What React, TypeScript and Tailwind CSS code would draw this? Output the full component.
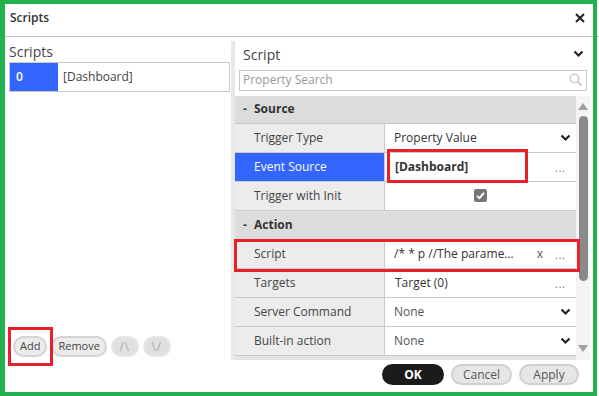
import React from "react";

const Chevron = () => (
  <svg width="11" height="8" viewBox="0 0 11 8" className="shrink-0">
    <path d="M1.5 1.5 L5.5 5.5 L9.5 1.5" fill="none" stroke="#222" strokeWidth="2.2" />
  </svg>
);

const Label = ({ children, active }: { children: React.ReactNode; active?: boolean }) => (
  <div
    className={
      "w-[150px] shrink-0 flex items-center pl-[19px] border-r border-[#c9c9c9] " +
      (active ? "bg-[#3366ff] text-white" : "bg-[#ececec] text-[#444]")
    }
  >
    {children}
  </div>
);

const Row = ({ children }: { children: React.ReactNode }) => (
  <div className="flex h-[29px] border-b border-[#c9c9c9]">{children}</div>
);

const Section = ({ title }: { title: string }) => (
  <div className="h-[28px] flex items-center bg-[#dcdcdc] border-b border-[#c9c9c9] text-[#333] font-bold">
    <span className="ml-[8px] w-[11px]">-</span>
    <span>{title}</span>
  </div>
);

const Dots = () => <span className="text-[#666] text-[10px] leading-none tracking-[1px] pt-[3px] mr-[3px]">...</span>;

export default function App() {
  return (
    <div
      className="relative w-[599px] h-[396px] bg-white overflow-hidden text-[12px] text-[#333]"
      style={{ fontFamily: '"Open Sans", "DejaVu Sans", sans-serif' }}
    >
      {/* Title bar */}
      <div className="h-[37px] border-b border-[#c2c2c2] flex items-center justify-between pl-[10px] pr-[14px]">
        <span className="text-[12px] text-[#333] font-semibold">Scripts</span>
        <svg width="10" height="10" viewBox="0 0 10 10">
          <path d="M1 1 L9 9 M9 1 L1 9" stroke="#222" strokeWidth="2" />
        </svg>
      </div>

      <div className="flex h-[323px]">
        {/* Left panel */}
        <div className="w-[231px] shrink-0 flex flex-col pl-[9px] pt-[5px]">
          <div className="text-[14px] text-[#444] leading-[20px]">Scripts</div>
          <div className="flex h-[30px] border border-[#c9c9c9] mr-[1px]">
            <div className="w-[48px] bg-[#3366ff] text-white font-semibold flex items-center pl-[6px]">0</div>
            <div className="flex items-center pl-[5px] text-[#444]">[Dashboard]</div>
          </div>
          <div className="flex-1" />
          <div className="flex gap-[4px] items-center pl-[4px] pb-[3px] text-[11px]">
            <div className="h-[21px] px-[5px] rounded-full bg-[#ececec] border-2 border-[#d4d4d4] flex items-center text-[#444]">Add</div>
            <div className="h-[21px] px-[5px] rounded-full bg-[#ececec] border-2 border-[#d4d4d4] flex items-center text-[#444]">Remove</div>
            <div className="h-[21px] w-[28px] rounded-full bg-[#e0e0e0] border-2 border-[#e6e6e6] flex items-center justify-center text-[#aaa] text-[12px] tracking-[1px]">/\</div>
            <div className="h-[21px] w-[28px] rounded-full bg-[#e0e0e0] border-2 border-[#e6e6e6] flex items-center justify-center text-[#aaa] text-[12px] tracking-[1px]">\/</div>
          </div>
        </div>

        {/* Splitter */}
        <div className="w-[4px] shrink-0 bg-[#e8e8e8] mt-[4px]" />

        {/* Right panel */}
        <div className="flex-1 flex flex-col">
          <div className="h-[33px] flex items-center justify-between pl-[8px] pr-[15px] pt-[2px]">
            <span className="text-[14px] text-[#444]">Script</span>
            <Chevron />
          </div>
          <div className="ml-[4px] mr-[12px] h-[21px] border border-[#c9c9c9] flex items-center justify-between pl-[3px] pr-[3px]">
            <span className="text-[#9a9a9a] text-[12px]">Property Search</span>
            <svg width="14" height="14" viewBox="0 0 14 14">
              <circle cx="5.5" cy="5.5" r="4.3" fill="none" stroke="#c4c4c4" strokeWidth="1.3" />
              <path d="M8.6 8.6 L12.8 12.8" stroke="#c4c4c4" strokeWidth="1.6" />
            </svg>
          </div>
          <div className="flex mt-[5px] h-[265px]">
            <div className="w-[341px] shrink-0 bg-[#e3e3e3] flex flex-col">
              <Section title="Source" />
              <Row>
                <Label>Trigger Type</Label>
                <div className="flex-1 bg-white flex items-center justify-between pl-[9px] pr-[5px] text-[#333]">
                  <span>Property Value</span>
                  <Chevron />
                </div>
              </Row>
              <Row>
                <Label active>Event Source</Label>
                <div className="flex-1 bg-white flex items-center justify-between pl-[10px] pr-[7px]">
                  <span className="font-bold text-[#333]">[Dashboard]</span>
                  <Dots />
                </div>
              </Row>
              <Row>
                <Label>Trigger with Init</Label>
                <div className="flex-1 bg-white flex items-center justify-center">
                  <svg width="13" height="13" viewBox="0 0 13 13">
                    <rect x="0" y="0" width="13" height="13" rx="2" fill="#777" />
                    <path d="M3 6.8 L5.4 9.2 L10 3.8" fill="none" stroke="white" strokeWidth="1.8" />
                  </svg>
                </div>
              </Row>
              <div className="h-[1px]" />
              <Section title="Action" />
              <Row>
                <Label>Script</Label>
                <div className="flex-1 bg-white flex items-center justify-between pl-[9px] pr-[7px]">
                  <span className="text-[#333]">/* * p //The parame…</span>
                  <div className="flex items-center gap-[12px]">
                    <span className="text-[#555]">x</span>
                    <Dots />
                  </div>
                </div>
              </Row>
              <Row>
                <Label>Targets</Label>
                <div className="flex-1 bg-white flex items-center justify-between pl-[10px] pr-[7px]">
                  <span className="text-[#333]">Target (0)</span>
                  <Dots />
                </div>
              </Row>
              <Row>
                <Label>Server Command</Label>
                <div className="flex-1 bg-white flex items-center justify-between pl-[9px] pr-[5px]">
                  <span className="text-[#555]">None</span>
                  <Chevron />
                </div>
              </Row>
              <Row>
                <Label>Built-in action</Label>
                <div className="flex-1 bg-white flex items-center justify-between pl-[9px] pr-[5px]">
                  <span className="text-[#555]">None</span>
                  <Chevron />
                </div>
              </Row>
            </div>
            {/* Scrollbar */}
            <div className="w-[14px] shrink-0 flex flex-col items-center bg-[#f4f4f4] pt-[7px] pb-[8px]">
              <svg width="10" height="7" viewBox="0 0 10 7">
                <path d="M0 7 L5 0 L10 7 Z" fill="#a0a0a0" />
              </svg>
              <div className="w-[9px] h-[165px] rounded-full bg-[#8a8a8a] mt-[6px]" />
              <div className="flex-1" />
              <svg width="10" height="7" viewBox="0 0 10 7">
                <path d="M0 0 L5 7 L10 0 Z" fill="#a0a0a0" />
              </svg>
            </div>
          </div>
        </div>
      </div>

      {/* Footer */}
      <div className="flex justify-end gap-[7px] pr-[20px] pt-[4px]">
        <div className="h-[21px] w-[62px] rounded-full bg-[#1b1b1b] text-white font-bold flex items-center justify-center">OK</div>
        <div className="h-[21px] w-[61px] rounded-full bg-[#e6e6e6] border-2 border-[#d0d0d0] text-[#555] flex items-center justify-center">Cancel</div>
        <div className="h-[21px] w-[60px] rounded-full bg-[#e6e6e6] border-2 border-[#d0d0d0] text-[#555] flex items-center justify-center">Apply</div>
      </div>

      {/* Annotation overlays */}
      <div className="absolute left-[387px] top-[149px] w-[141px] h-[34px] border-[3px] border-[#e8202a]" />
      <div className="absolute left-[234px] top-[239px] w-[346px] h-[33px] border-[3px] border-[#e8202a]" />
      <div className="absolute left-[8px] top-[327px] w-[45px] h-[39px] border-[3px] border-[#e8202a]" />
      <div className="absolute left-0 top-0 w-[597px] h-[396px] border-[4px] border-l-[5px] border-[#22b14c]" />
    </div>
  );
}
